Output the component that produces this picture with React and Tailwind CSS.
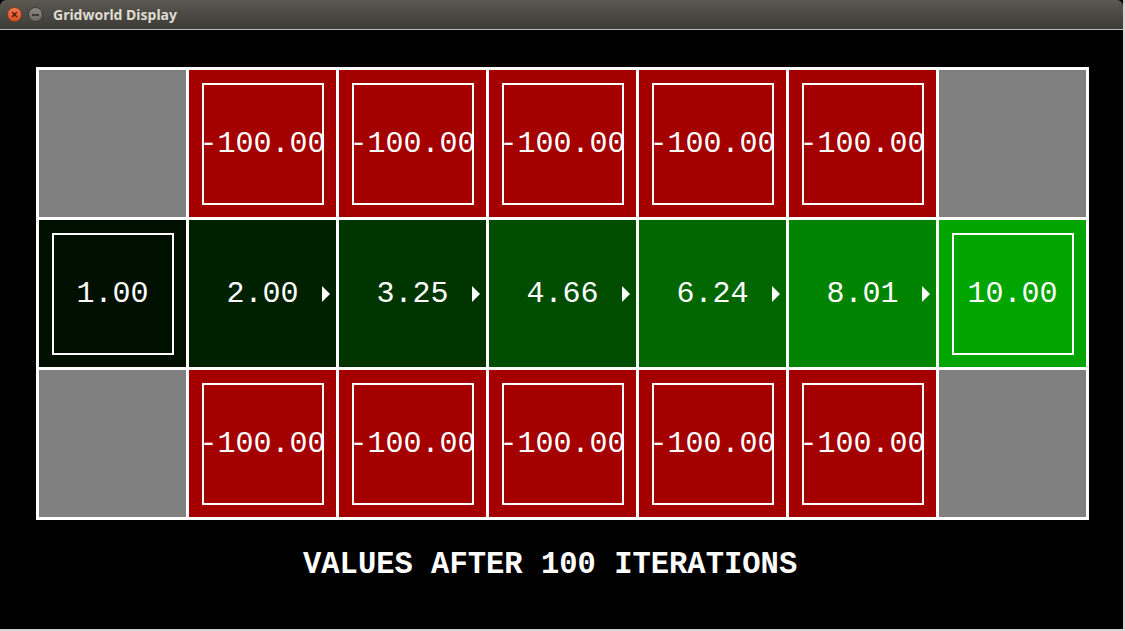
import React from 'react';

// Gridworld value display: 3 rows x 7 columns
const wall = { kind: 'wall' };
const pit = { kind: 'box', label: '-100.00', bg: 'bg-[#a50000]' };

const rows = [
  [wall, pit, pit, pit, pit, pit, wall],
  [
    { kind: 'box', label: '1.00', bg: 'bg-[#001000]' },
    { kind: 'arrow', label: '2.00', bg: 'bg-[#002100]' },
    { kind: 'arrow', label: '3.25', bg: 'bg-[#003500]' },
    { kind: 'arrow', label: '4.66', bg: 'bg-[#004d00]' },
    { kind: 'arrow', label: '6.24', bg: 'bg-[#006700]' },
    { kind: 'arrow', label: '8.01', bg: 'bg-[#008400]' },
    { kind: 'box', label: '10.00', bg: 'bg-[#00a500]' },
  ],
  [wall, pit, pit, pit, pit, pit, wall],
];

const mono = { fontFamily: '"Liberation Mono", "Courier New", monospace' };

function Cell({ cell }) {
  if (cell.kind === 'wall') {
    return <div className="bg-[#808080]" />;
  }
  return (
    <div className={`relative flex items-center justify-center ${cell.bg}`}>
      {cell.kind === 'box' ? (
        <div className="w-[122px] h-[122px] border-2 border-white flex items-center justify-center">
          <span className="text-[30px] leading-none text-white whitespace-nowrap" style={mono}>
            {cell.label}
          </span>
        </div>
      ) : (
        <>
          <span className="text-[30px] leading-none text-white whitespace-nowrap" style={mono}>
            {cell.label}
          </span>
          <svg
            className="absolute right-[6px] top-1/2 -translate-y-1/2"
            width="8"
            height="16"
            viewBox="0 0 8 16"
          >
            <polygon points="0,0 8,8 0,16" fill="#ffffff" />
          </svg>
        </>
      )}
    </div>
  );
}

function TitleBar() {
  return (
    <div className="h-[30px] flex items-center gap-[6px] pl-[7px] rounded-t-[6px] bg-gradient-to-b from-[#5a5850] to-[#3c3b37] border-b border-[#bdbab3]">
      <div className="w-[15px] h-[15px] rounded-full bg-gradient-to-b from-[#f47a4f] to-[#d9501f] flex items-center justify-center border border-[#8a3a1c]">
        <svg width="7" height="7" viewBox="0 0 7 7">
          <path d="M1 1 L6 6 M6 1 L1 6" stroke="#4a1a08" strokeWidth="1.4" />
        </svg>
      </div>
      <div className="w-[15px] h-[15px] rounded-full bg-gradient-to-b from-[#8a8882] to-[#6a6863] flex items-center justify-center border border-[#3a3934]">
        <div className="w-[7px] h-[2px] bg-[#3a3934]" />
      </div>
      <span
        className="ml-[4px] text-[14px] font-bold text-[#dfdbd2]"
        style={{ fontFamily: '"Noto Sans", "Open Sans", sans-serif' }}
      >
        Gridworld Display
      </span>
    </div>
  );
}

export default function App() {
  return (
    <div className="w-[1125px] h-[631px] bg-[#d6d6d6] overflow-hidden">
      <div className="w-[1123px] h-[629px] flex flex-col bg-black">
        <TitleBar />
        <div className="flex-1 bg-black pl-[36px] pt-[37px]">
          <div className="grid grid-cols-[repeat(7,147px)] grid-rows-[repeat(3,147px)] gap-[3px] p-[3px] bg-white w-max">
            {rows.flatMap((row, r) =>
              row.map((cell, c) => <Cell key={`${r}-${c}`} cell={cell} />)
            )}
          </div>
          <div
            className="mt-[30px] pl-[267px] text-[30.5px] leading-none font-bold text-white whitespace-nowrap"
            style={mono}
          >
            VALUES AFTER 100 ITERATIONS
          </div>
        </div>
      </div>
    </div>
  );
}
